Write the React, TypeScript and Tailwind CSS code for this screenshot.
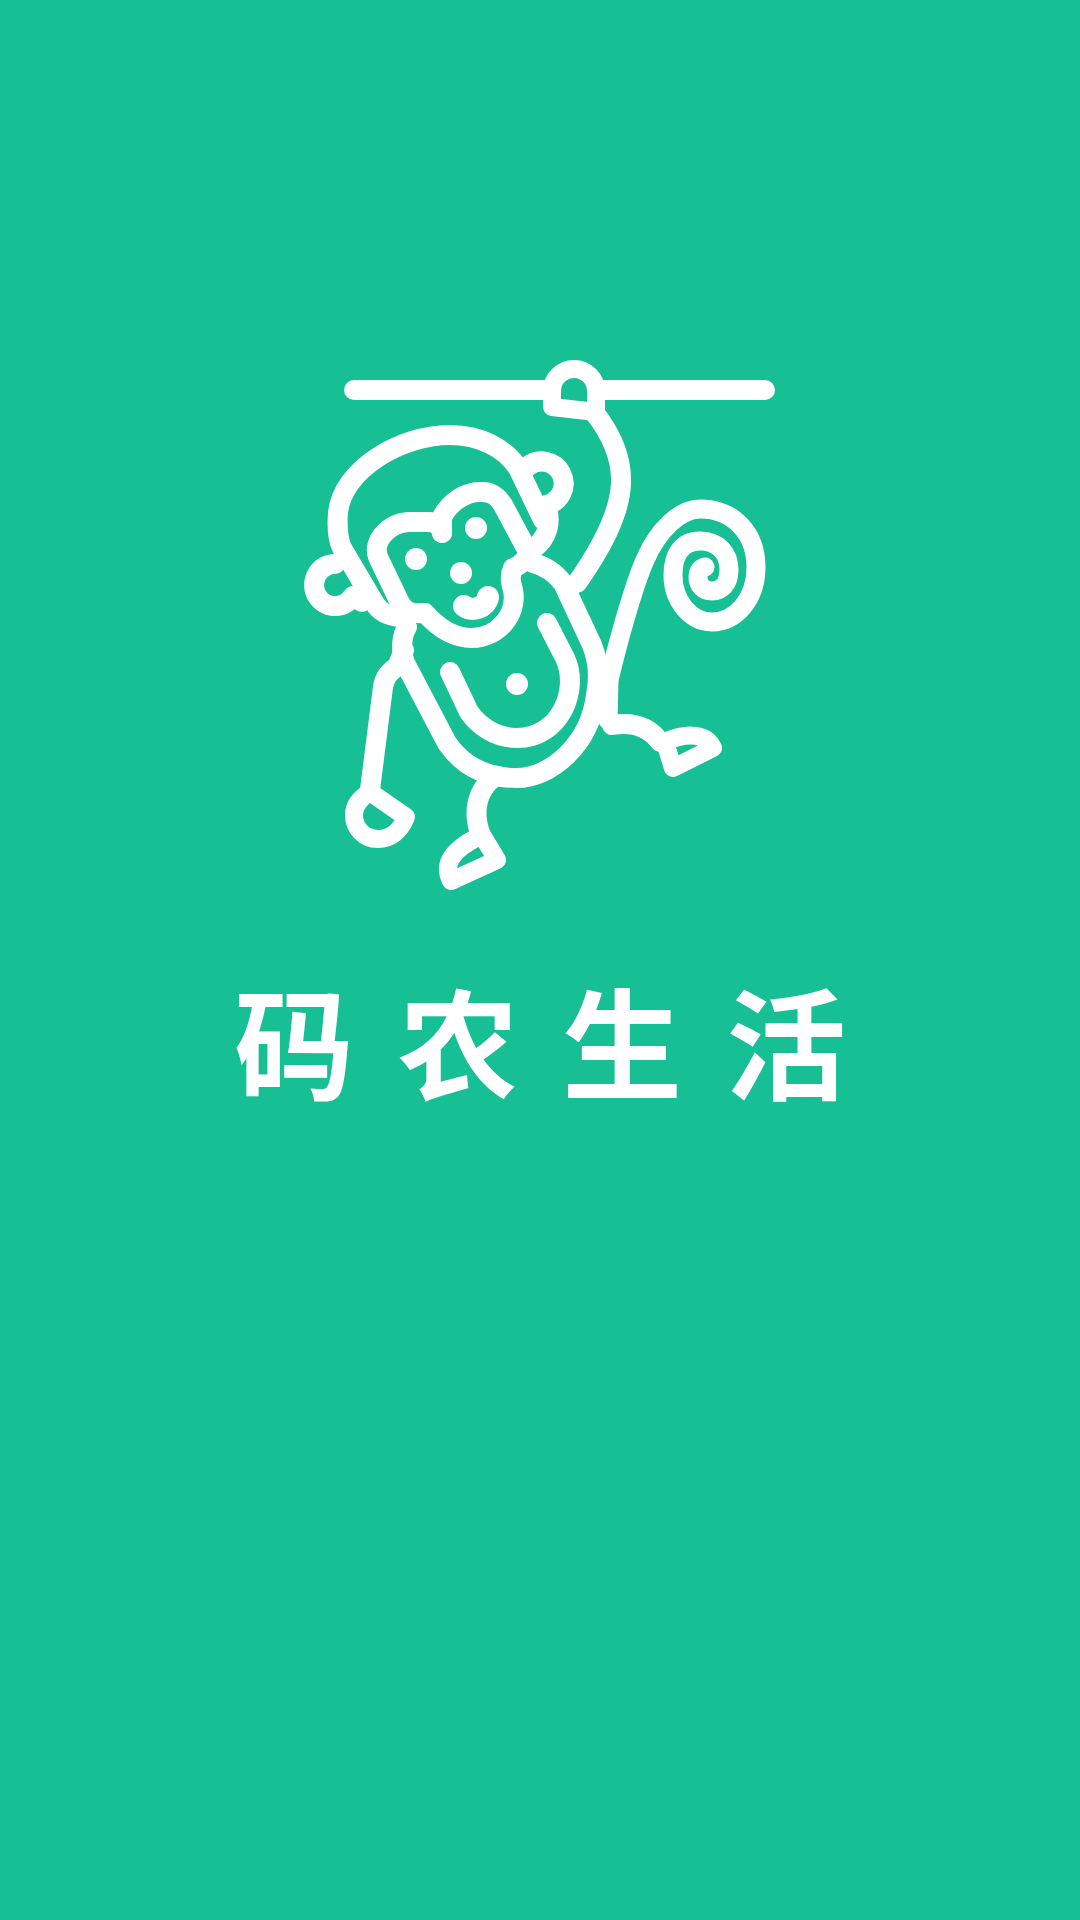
export default function App() {
  return (
    <div className="flex min-h-[1920px] w-[1080px] flex-col items-center bg-[#17bf94] pt-[340px]">
      <svg
        viewBox="290 340 500 560"
        className="h-[560px] w-[500px] blur-[0.5px]"
        fill="none"
        stroke="#ffffff"
        strokeWidth={20}
        strokeLinecap="round"
        strokeLinejoin="round"
      >
        {/* bar and hand */}
        <path d="M354 390H545M600 390H765" />
        <path d="M552 407V391A22 22 0 0 1 596 391V412Z" strokeWidth={18} />
        {/* arm */}
        <path d="M594 412C612 435 622 458 621 483C620 515 600 550 577 583" />
        {/* head */}
        <path d="M400 617C388 616 380 612 375 604L342 548C338 540 337 525 338 513C342 470 400 435 450 435C480 435 505 448 518 468L543 520" />
        {/* right ear */}
        <path d="M527 467A22 22 0 1 1 546 505C552 522 548 538 533 549" />
        {/* left ear */}
        <path d="M335 564A21 21 0 1 0 353 596L362 602" />
        {/* face */}
        <path d="M442 533C440 525 436 522 428 522H408C390 523 372 540 378 557L400 603C405 612 412 614 425 613C440 630 455 638 472 638C497 638 518 615 513 590C510 580 510 575 513 568C520 566 527 558 530 553" />
        <path d="M442 533V517C450 502 465 492 480 492C492 491 498 497 503 505L526 548" />
        <circle cx="476" cy="528" r="11" fill="#ffffff" stroke="none" />
        <circle cx="416" cy="559" r="11" fill="#ffffff" stroke="none" />
        <circle cx="461" cy="573" r="11" fill="#ffffff" stroke="none" />
        <path d="M464 606C472 612 486 608 488 597" strokeWidth={22} />
        {/* body */}
        <path d="M533 563C545 566 556 574 563 583L592 645C598 660 600 675 596 695C590 745 550 778 517 778C485 778 462 765 447 743L405 663C400 650 402 635 407 627" />
        {/* belly */}
        <path d="M547 623L565 658C580 690 560 738 517 738C495 738 478 725 469 712L450 672" />
        <circle cx="517" cy="684" r="11" fill="#ffffff" stroke="none" />
        {/* tail */}
        <path d="M608 720L609 680C616 650 632 590 645 560C658 530 680 509 700 509C735 509 756 535 756 567C756 600 735 622 712 622C690 622 673 600 673 575C673 553 683 541 700 541C718 541 729 553 729 570C729 583 722 591 712 591C703 591 698 585 698 577C698 571 701 568 705 567" strokeWidth={19} />
        {/* left leg */}
        <path d="M404 650L397 667C388 672 384 680 383 687L370 790" />
        <path d="M370 792L406 817C400 832 390 839 378 839C364 839 354 828 354 815C354 805 360 798 370 792Z" strokeWidth={18} />
        {/* right leg */}
        <path d="M612 725C630 722 648 725 660 742" />
        <path d="M665 742C680 735 705 730 713 748L673 768Z" strokeWidth={18} />
        {/* middle leg */}
        <path d="M493 778C478 790 472 810 480 833" />
        <path d="M482 835L497 860L451 881C443 865 450 850 482 835Z" strokeWidth={18} />
      </svg>
      <div className="mt-[64px] pl-[44px] font-['Noto_Sans_CJK_SC',sans-serif] text-[120px] leading-[150px] font-bold tracking-[44px] text-white">
        码农生活
      </div>
    </div>
  );
}
